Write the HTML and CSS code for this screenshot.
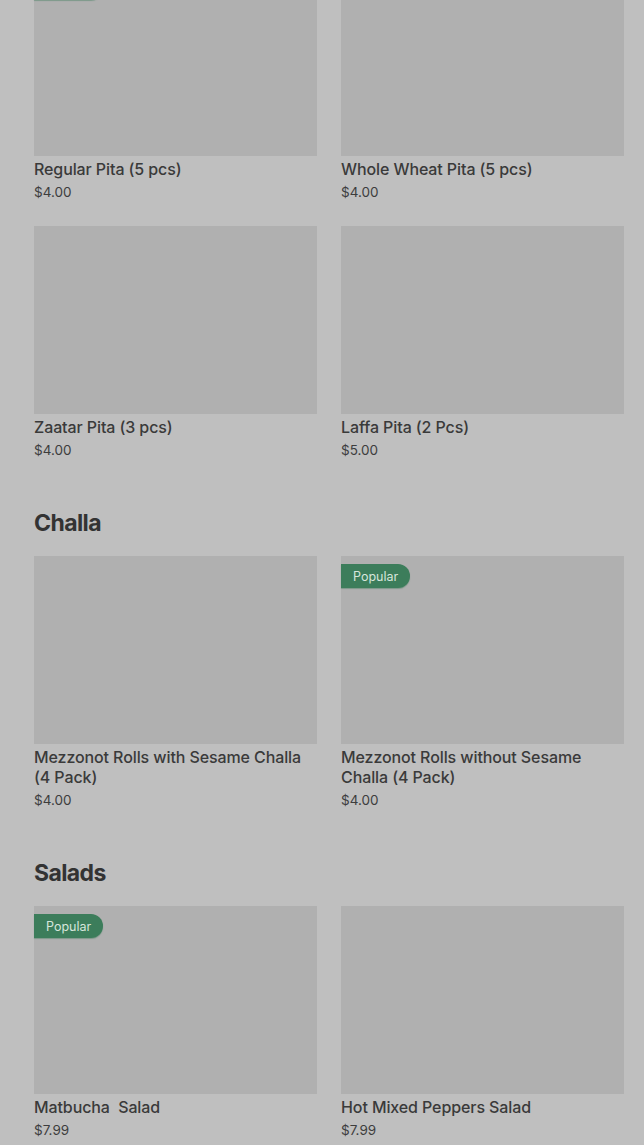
FILE: index.html
```html
<!DOCTYPE html>
<html lang="en">
<head>
<meta charset="utf-8">
<title>Menu</title>
<link rel="stylesheet" href="styles.css">
</head>
<body>
<main class="menu">
  <section class="section first">
    <div class="grid">
      <div class="card">
        <div class="thumb"><span class="badge">Popular</span></div>
        <div class="name">Regular Pita (5 pcs)</div>
        <div class="price">$4.00</div>
      </div>
      <div class="card">
        <div class="thumb"></div>
        <div class="name">Whole Wheat Pita (5 pcs)</div>
        <div class="price">$4.00</div>
      </div>
      <div class="card">
        <div class="thumb"></div>
        <div class="name">Zaatar Pita (3 pcs)</div>
        <div class="price">$4.00</div>
      </div>
      <div class="card">
        <div class="thumb"></div>
        <div class="name">Laffa Pita (2 Pcs)</div>
        <div class="price">$5.00</div>
      </div>
    </div>
  </section>

  <section class="section">
    <h2 class="heading">Challa</h2>
    <div class="grid">
      <div class="card">
        <div class="thumb"></div>
        <div class="name">Mezzonot Rolls with Sesame Challa (4 Pack)</div>
        <div class="price">$4.00</div>
      </div>
      <div class="card">
        <div class="thumb"><span class="badge">Popular</span></div>
        <div class="name">Mezzonot Rolls without Sesame Challa (4 Pack)</div>
        <div class="price">$4.00</div>
      </div>
    </div>
  </section>

  <section class="section">
    <h2 class="heading">Salads</h2>
    <div class="grid">
      <div class="card">
        <div class="thumb"><span class="badge">Popular</span></div>
        <div class="name">Matbucha&nbsp; Salad</div>
        <div class="price">$7.99</div>
      </div>
      <div class="card">
        <div class="thumb"></div>
        <div class="name">Hot Mixed Peppers Salad</div>
        <div class="price">$7.99</div>
      </div>
    </div>
  </section>
</main>
</body>
</html>
```

FILE: styles.css
```css
* { box-sizing: border-box; }

html, body {
  margin: 0;
  padding: 0;
  background: #bfbfbf;
}

body {
  font-family: Inter, "Liberation Sans", sans-serif;
  color: #3a3a3a;
  overflow: hidden;
}

.menu {
  margin-top: -32px;
  padding: 0 20px 0 34px;
}

.section {
  margin-bottom: 47px;
}

.heading {
  margin: 0 0 17px;
  font-size: 23px;
  line-height: 32px;
  font-weight: 700;
  color: #333333;
  letter-spacing: -0.6px;
}

.grid {
  display: grid;
  grid-template-columns: 283px 283px;
  column-gap: 24px;
  row-gap: 24px;
}

.thumb {
  position: relative;
  height: 188px;
  background: #b0b0b0;
}

.badge {
  position: absolute;
  left: 0;
  top: 8px;
  height: 24px;
  padding: 0 12px;
  display: flex;
  align-items: center;
  background: #3c7d5b;
  color: #d6e6dc;
  font-size: 12.5px;
  border-radius: 0 12px 12px 0;
  box-shadow: 0 1px 1px rgba(60, 125, 91, 0.45);
}

.name {
  margin-top: 3px;
  font-size: 16px;
  line-height: 20px;
  font-weight: 500;
  color: #3a3a3a;
  letter-spacing: -0.1px;
}

.price {
  margin-top: 3px;
  font-size: 13.5px;
  line-height: 20px;
  color: #3d3d3d;
}
```
